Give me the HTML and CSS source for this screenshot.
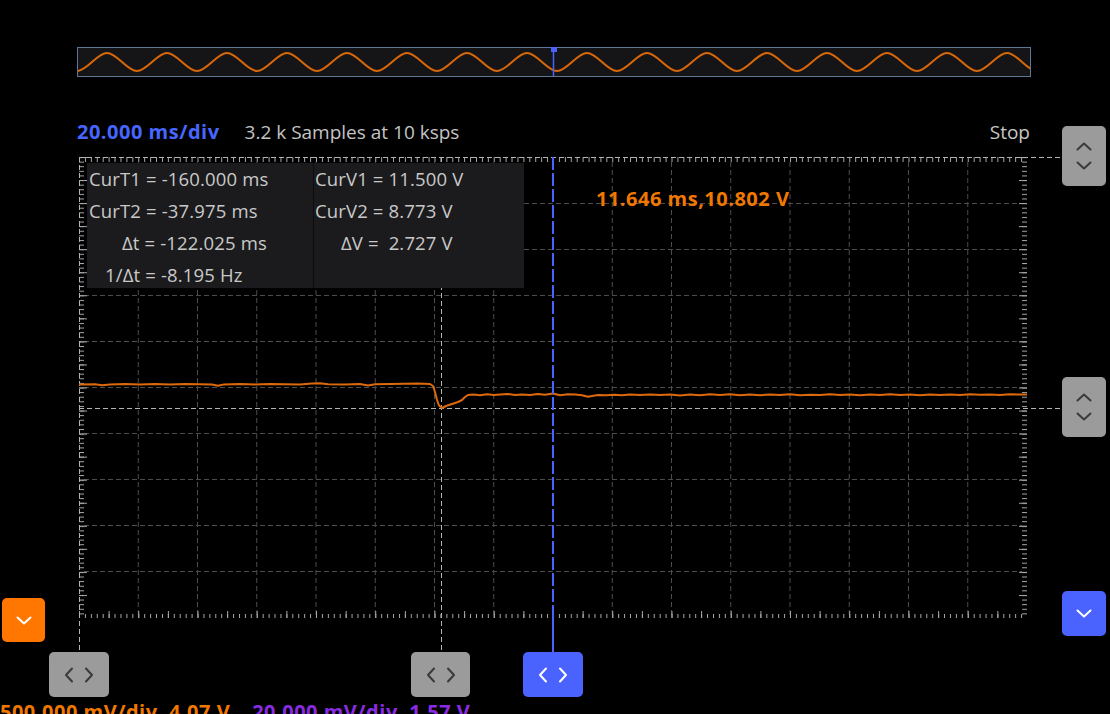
FILE: index.html
```html
<!DOCTYPE html>
<html>
<head>
<meta charset="utf-8">
<title>Scope</title>
<link rel="stylesheet" href="styles.css">
</head>
<body>
<div class="app">
  <div class="overview">
    <svg class="overview-svg" width="952" height="28" viewBox="78 48 952 28">
      <path class="ov-wave" d="M77,71 C87,71 97,53 107,53 S127,71 137,71 S157,53 167,53 S187,71 197,71 S217,53 227,53 S247,71 257,71 S277,53 287,53 S307,71 317,71 S337,53 347,53 S367,71 377,71 S397,53 407,53 S427,71 437,71 S457,53 467,53 S487,71 497,71 S517,53 527,53 S547,71 557,71 S577,53 587,53 S607,71 617,71 S637,53 647,53 S667,71 677,71 S697,53 707,53 S727,71 737,71 S757,53 767,53 S787,71 797,71 S817,53 827,53 S847,71 857,71 S877,53 887,53 S907,71 917,71 S937,53 947,53 S967,71 977,71 S997,53 1007,53 S1027,71 1037,71"/>
      <line class="ov-cursor" x1="553.5" y1="48" x2="553.5" y2="76"/>
    </svg>
  </div>
  <div class="ov-marker"></div>

  <div class="header">
    <span class="timebase">20.000 ms/div</span>
    <span class="samples">3.2 k Samples at 10 ksps</span>
    <span class="status">Stop</span>
  </div>

  <svg class="scope" width="1110" height="557" viewBox="0 143 1110 557">
    <defs>
      <pattern id="tickTop" patternUnits="userSpaceOnUse" x="79" y="157" width="5.925" height="6">
        <rect x="0" y="0" width="1" height="5" fill="#a8a8a8"/>
      </pattern>
      <pattern id="tickBot" patternUnits="userSpaceOnUse" x="79" y="0" width="5.925" height="720">
        <rect x="0" y="614" width="1" height="4" fill="#a8a8a8"/>
      </pattern>
      <pattern id="tickBotMid" patternUnits="userSpaceOnUse" x="79" y="0" width="29.625" height="720">
        <rect x="0" y="611" width="1" height="7" fill="#a8a8a8"/>
      </pattern>
      <pattern id="tickLeft" patternUnits="userSpaceOnUse" x="79" y="157" width="10" height="4.61">
        <rect x="0" y="0" width="5" height="1" fill="#a8a8a8"/>
      </pattern>
      <pattern id="tickLeftMid" patternUnits="userSpaceOnUse" x="79" y="157" width="10" height="23.05">
        <rect x="0" y="0" width="8" height="1" fill="#a8a8a8"/>
      </pattern>
      <pattern id="tickRight" patternUnits="userSpaceOnUse" x="0" y="157" width="1110" height="4.61">
        <rect x="1022" y="0" width="5" height="1" fill="#a8a8a8"/>
      </pattern>
      <pattern id="tickRightMid" patternUnits="userSpaceOnUse" x="0" y="157" width="1110" height="23.05">
        <rect x="1019" y="0" width="8" height="1" fill="#a8a8a8"/>
      </pattern>
    </defs>

    <g class="grid">
      <line x1="138.25" y1="162" x2="138.25" y2="618"/>
      <line x1="197.5" y1="162" x2="197.5" y2="618"/>
      <line x1="256.75" y1="162" x2="256.75" y2="618"/>
      <line x1="316" y1="162" x2="316" y2="618"/>
      <line x1="375.25" y1="162" x2="375.25" y2="618"/>
      <line x1="434.5" y1="162" x2="434.5" y2="618"/>
      <line x1="493.75" y1="162" x2="493.75" y2="618"/>
      <line x1="612.25" y1="162" x2="612.25" y2="618"/>
      <line x1="671.5" y1="162" x2="671.5" y2="618"/>
      <line x1="730.75" y1="162" x2="730.75" y2="618"/>
      <line x1="790" y1="162" x2="790" y2="618"/>
      <line x1="849.25" y1="162" x2="849.25" y2="618"/>
      <line x1="908.5" y1="162" x2="908.5" y2="618"/>
      <line x1="967.75" y1="162" x2="967.75" y2="618"/>
      <line x1="84" y1="203.5" x2="1022" y2="203.5"/>
      <line x1="84" y1="249.5" x2="1022" y2="249.5"/>
      <line x1="84" y1="295.5" x2="1022" y2="295.5"/>
      <line x1="84" y1="341.5" x2="1022" y2="341.5"/>
      <line x1="84" y1="387.5" x2="1022" y2="387.5"/>
      <line x1="84" y1="433.5" x2="1022" y2="433.5"/>
      <line x1="84" y1="479.5" x2="1022" y2="479.5"/>
      <line x1="84" y1="525.5" x2="1022" y2="525.5"/>
      <line x1="84" y1="571.5" x2="1022" y2="571.5"/>
    </g>

    <rect x="79" y="157" width="948" height="5" fill="url(#tickTop)"/>
    <rect x="79" y="610" width="948" height="8" fill="url(#tickBot)"/>
    <rect x="79" y="610" width="948" height="8" fill="url(#tickBotMid)"/>
    <rect x="79" y="157" width="8" height="461" fill="url(#tickLeft)"/>
    <rect x="79" y="157" width="8" height="461" fill="url(#tickLeftMid)"/>
    <rect x="1019" y="157" width="8" height="461" fill="url(#tickRight)"/>
    <rect x="1019" y="157" width="8" height="461" fill="url(#tickRightMid)"/>

    <g class="cursors">
      <line x1="79" y1="157.5" x2="1062" y2="157.5"/>
      <line x1="79" y1="408.5" x2="1062" y2="408.5"/>
      <line x1="79.5" y1="157" x2="79.5" y2="652"/>
      <line x1="441.5" y1="157" x2="441.5" y2="652"/>
    </g>

    <path class="trace" d="M79,384.5 L95,384.2 L102,385.2 L110,384.6 L125,384 L140,384.4 L155,384.1 L170,384.5 L185,384 L200,384.3 L212,384.6 L218,385.8 L224,384.4 L240,384.1 L255,384.5 L270,384 L285,384.3 L300,384.6 L312,383.4 L320,383.3 L328,384.2 L345,384.4 L360,384 L368,385.6 L375,384.2 L390,384 L405,383.8 L418,383.6 L430,384 L433,386 L435,392 L437,400 L439,405.5 L442,408 L446,406 L452,404 L458,402 L462,400 L465,397 L468,395 L474,394.6 L480,395.2 L487,394.3 L494,394.9 L500,394.5 L508,394 L515,395.1 L522,394.4 L530,394.9 L538,394.1 L545,394.8 L553,393.5 L560,395.2 L568,394.2 L575,394.6 L582,395.3 L588,396.8 L592,396 L598,395 L606,395.3 L614,394.7 L622,395.2 L630,394.5 L640,395 L650,394.4 L660,395.1 L670,394.5 L680,395.4 L690,394.6 L700,395.2 L710,394.3 L720,395 L730,394.3 L740,395.3 L750,394.5 L760,395.2 L770,394.6 L780,394.9 L790,394.2 L800,395.3 L810,394.7 L820,395 L830,394.2 L840,395.1 L850,394.6 L860,395.3 L870,394.5 L880,395 L890,394.3 L900,394.9 L910,394.5 L920,395.2 L930,394.4 L940,394.9 L950,394.6 L960,395 L970,394.3 L980,394.8 L990,394.5 L1000,395.1 L1010,394.2 L1020,394.6 L1027,394.5"/>

    <line class="cursor-main" x1="553" y1="157" x2="553" y2="618"/>
    <line class="cursor-main-solid" x1="553" y1="618" x2="553" y2="652"/>
  </svg>

  <div class="channels">
    <span class="ch ch1">500.000 mV/div&nbsp;&nbsp;4.07 V</span>
    <span class="ch ch2">20.000 mV/div&nbsp;&nbsp;1.57 V</span>
  </div>

  <div class="readout">
    <div class="readout-col">
      <div class="row">CurT1 = -160.000 ms</div>
      <div class="row">CurT2 = -37.975 ms</div>
      <div class="row in-dt">Δt = -122.025 ms</div>
      <div class="row in-inv">1/Δt = -8.195 Hz</div>
    </div>
    <div class="readout-col right">
      <div class="row">CurV1 = 11.500 V</div>
      <div class="row">CurV2 = 8.773 V</div>
      <div class="row in-dv">ΔV =&nbsp;&nbsp;2.727 V</div>
    </div>
  </div>

  <div class="cursor-value">11.646 ms,10.802 V</div>

  <button class="btn btn-gray btn-v1" aria-label="Cursor V1">
    <svg width="16" height="28" viewBox="0 0 16 28"><path d="M1.5,7.5 L8,1.5 L14.5,7.5 M1.5,20.5 L8,26.5 L14.5,20.5"/></svg>
  </button>
  <button class="btn btn-gray btn-v2" aria-label="Cursor V2">
    <svg width="16" height="28" viewBox="0 0 16 28"><path d="M1.5,7.5 L8,1.5 L14.5,7.5 M1.5,20.5 L8,26.5 L14.5,20.5"/></svg>
  </button>
  <button class="btn btn-blue btn-level" aria-label="Level">
    <svg width="16" height="9" viewBox="0 0 16 9"><path d="M1.5,1.5 L8,7.5 L14.5,1.5"/></svg>
  </button>
  <button class="btn btn-orange btn-ch" aria-label="Channel">
    <svg width="16" height="9" viewBox="0 0 16 9"><path d="M1.5,1.5 L8,7.5 L14.5,1.5"/></svg>
  </button>
  <button class="btn btn-gray btn-t1" aria-label="Cursor T1">
    <svg width="30" height="16" viewBox="0 0 30 16"><path d="M8,1.5 L2,8 L8,14.5 M22,1.5 L28,8 L22,14.5"/></svg>
  </button>
  <button class="btn btn-gray btn-t2" aria-label="Cursor T2">
    <svg width="30" height="16" viewBox="0 0 30 16"><path d="M8,1.5 L2,8 L8,14.5 M22,1.5 L28,8 L22,14.5"/></svg>
  </button>
  <button class="btn btn-blue btn-tc" aria-label="Time cursor">
    <svg width="30" height="16" viewBox="0 0 30 16"><path d="M8,1.5 L2,8 L8,14.5 M22,1.5 L28,8 L22,14.5"/></svg>
  </button>
</div>
</body>
</html>
```

FILE: styles.css
```css
* { box-sizing: border-box; }

html, body {
  margin: 0;
  padding: 0;
  background: #000;
}

.app {
  position: relative;
  width: 1110px;
  height: 714px;
  overflow: hidden;
  background: #000;
  font-family: "Open Sans", "DejaVu Sans", sans-serif;
  display: flex;
  flex-direction: column;
}

.overview {
  margin: 47px 0 0 77px;
  width: 954px;
  height: 30px;
  border: 1px solid #5d7797;
  background: #151517;
  flex: none;
}

.overview-svg { display: block; }

.ov-wave {
  fill: none;
  stroke: #d9680a;
  stroke-width: 2;
}

.ov-cursor {
  stroke: #4a63ff;
  stroke-width: 1.5;
}

.ov-marker {
  position: absolute;
  left: 551px;
  top: 47px;
  width: 6px;
  height: 5px;
  background: #4a63ff;
}

.header {
  flex: none;
  display: flex;
  align-items: baseline;
  margin: 43px 0 0 77px;
  width: 953px;
  height: 23px;
  line-height: 23px;
  white-space: nowrap;
}

.timebase {
  color: #4766ff;
  font-weight: 700;
  font-size: 20px;
  letter-spacing: 0.5px;
}

.samples {
  margin-left: 25px;
  color: #c4c4c4;
  font-size: 19px;
}

.status {
  margin-left: auto;
  color: #c8c8c8;
  font-size: 19px;
}

.scope {
  display: block;
  flex: none;
}

.grid line {
  stroke: #4d4d4d;
  stroke-width: 1;
  stroke-dasharray: 5 3;
}

.cursors line {
  stroke: #b4b4b4;
  stroke-width: 1;
  stroke-dasharray: 5 3;
}

.trace {
  fill: none;
  stroke: #dc6a0c;
  stroke-width: 2;
  stroke-linejoin: round;
}

.cursor-main {
  stroke: #4a63ff;
  stroke-width: 2;
  stroke-dasharray: 13 3;
}

.cursor-main-solid {
  stroke: #4a63ff;
  stroke-width: 2;
}

.channels {
  flex: none;
  display: flex;
  height: 24px;
  line-height: 24px;
  font-weight: 700;
  font-size: 20px;
  letter-spacing: 0.5px;
  white-space: nowrap;
}

.ch1 { color: #f07800; margin-left: 0; }
.ch2 { color: #8a2be2; margin-left: 22px; }

.readout {
  position: absolute;
  left: 87px;
  top: 163px;
  width: 437px;
  height: 125px;
  display: grid;
  grid-template-columns: 226px 210px;
  column-gap: 1px;
  background: #0c0c0c;
  overflow: hidden;
}

.readout-col {
  background: #1b1b1d;
  padding-left: 2px;
}

.readout-col.right { padding-left: 1px; }

.row {
  height: 32px;
  line-height: 31px;
  font-size: 18.5px;
  letter-spacing: 0.15px;
  color: #c9c9c9;
  white-space: nowrap;
}

.in-dt { padding-left: 33px; }
.in-inv { padding-left: 16px; }
.in-dv { padding-left: 26px; }

.cursor-value {
  position: absolute;
  left: 596px;
  top: 187px;
  line-height: 24px;
  font-size: 20px;
  font-weight: 700;
  letter-spacing: 0.5px;
  color: #f07800;
  white-space: nowrap;
}

.btn {
  position: absolute;
  margin: 0;
  padding: 0;
  border: none;
  border-radius: 5px;
  display: flex;
  align-items: center;
  justify-content: center;
}

.btn svg path {
  fill: none;
  stroke-width: 2;
  stroke-linecap: round;
  stroke-linejoin: round;
}

.btn-gray { background: #9b9b9b; }
.btn-gray svg path { stroke: #3a3a3a; }
.btn-blue { background: #4a63ff; }
.btn-blue svg path { stroke: #ffffff; }
.btn-orange { background: #ff7700; }
.btn-orange svg path { stroke: #ffffff; }

.btn-v1 { left: 1062px; top: 126px; width: 44px; height: 60px; }
.btn-v2 { left: 1062px; top: 377px; width: 44px; height: 60px; }
.btn-level { left: 1062px; top: 591px; width: 44px; height: 45px; }
.btn-ch { left: 2px; top: 598px; width: 43px; height: 44px; }
.btn-t1 { left: 49px; top: 652px; width: 60px; height: 45px; }
.btn-t2 { left: 411px; top: 652px; width: 59px; height: 45px; }
.btn-tc { left: 523px; top: 652px; width: 60px; height: 45px; }
```
